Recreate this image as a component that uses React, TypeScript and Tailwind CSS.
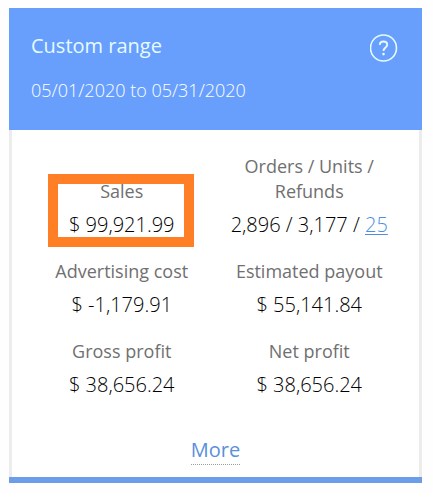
import type { ReactNode } from 'react';

interface Metric {
  label: string;
  value: ReactNode;
  highlighted?: boolean;
}

const metrics: Metric[] = [
  { label: 'Sales', value: '$ 99,921.99', highlighted: true },
  {
    label: 'Orders / Units / Refunds',
    value: (
      <>
        2,896 / 3,177 /{' '}
        <a href="#refunds" className="text-[#4a90e2] underline decoration-1 underline-offset-2">
          25
        </a>
      </>
    ),
  },
  { label: 'Advertising cost', value: '$ -1,179.91' },
  { label: 'Estimated payout', value: '$ 55,141.84' },
  { label: 'Gross profit', value: '$ 38,656.24' },
  { label: 'Net profit', value: '$ 38,656.24' },
];

function HelpIcon() {
  return (
    <svg width="28" height="28" viewBox="0 0 28 28" fill="none" stroke="currentColor" aria-hidden="true">
      <circle cx="13.5" cy="14" r="13" strokeWidth="1.6" />
      <path d="M9.7 10.8C9.9 8.8 11.3 7.5 13.4 7.5C15.7 7.5 17.2 8.8 17.2 10.8C17.2 13.4 13.5 13.7 13.5 17" strokeWidth="1.8" />
      <circle cx="13.5" cy="20.1" r="1.3" fill="currentColor" stroke="none" />
    </svg>
  );
}

function MetricItem({ label, value, highlighted }: Metric) {
  return (
    <div className="relative text-center">
      <dt className="mx-auto mb-1.5 max-w-40 text-lg leading-[25px] text-[#707070]">{label}</dt>
      <dd className="text-xl leading-[30px] font-light whitespace-nowrap text-black">{value}</dd>
      {highlighted && (
        <div className="pointer-events-none absolute -top-[5px] -bottom-[7px] left-5 w-[146px] border-10 border-[#ff7f27]" />
      )}
    </div>
  );
}

export default function App() {
  return (
    <div className="min-h-screen bg-[#fefefe] pt-2 pr-[11px] pl-[9px] font-['Open_Sans',sans-serif]">
      <section className="border-b-6 border-[#6b9de8]">
        <header className="flex items-start justify-between bg-[#689ffd] pt-6 pr-6 pb-[25px] pl-[22px] text-[#e6fbff]">
          <div>
            <h2 className="text-xl leading-7">Custom range</h2>
            <p className="mt-4 text-lg leading-[29px] font-light text-white">05/01/2020 to 05/31/2020</p>
          </div>
          <button type="button" aria-label="Help" className="mt-0.5">
            <HelpIcon />
          </button>
        </header>

        <div className="border-x-3 border-[#ececec] bg-white px-4 pt-6 pb-3">
          <dl className="grid grid-cols-2 items-end gap-y-[19px]">
            {metrics.map((metric) => (
              <MetricItem key={metric.label} {...metric} />
            ))}
          </dl>
          <div className="mt-[35px] flex justify-center">
            <a href="#more" className="border-b border-dotted border-[#a0a0a0] text-xl leading-[29px] text-[#5a8fdc]">
              More
            </a>
          </div>
        </div>
      </section>
    </div>
  );
}
